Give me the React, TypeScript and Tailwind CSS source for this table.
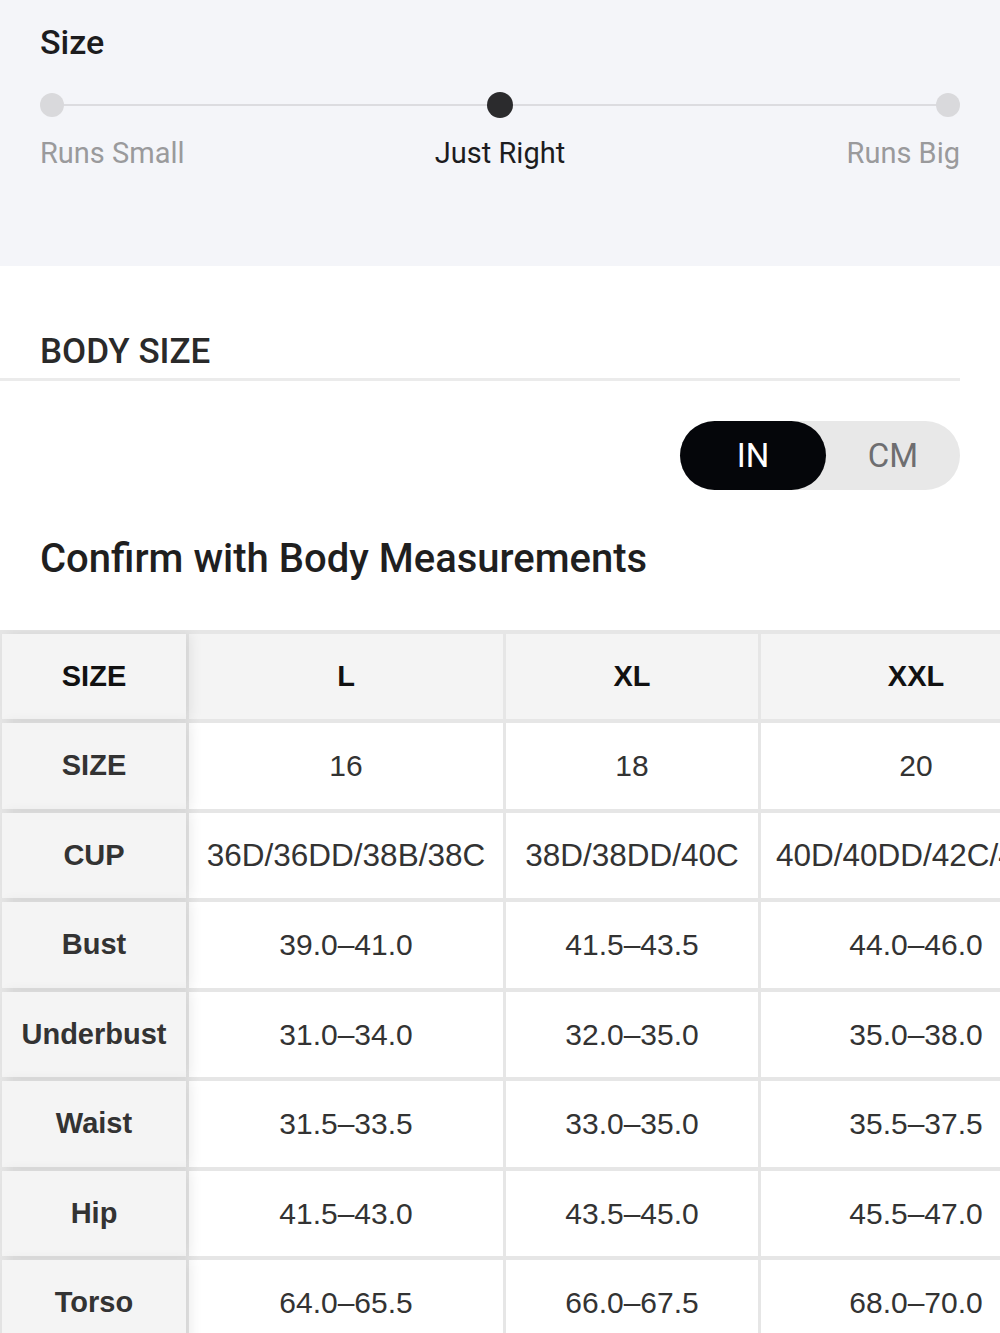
const heads = ['L', 'XL', 'XXL'];

const rows: [string, string[]][] = [
  ['SIZE', ['16', '18', '20']],
  ['CUP', ['36D/36DD/38B/38C', '38D/38DD/40C', '40D/40DD/42C/42D']],
  ['Bust', ['39.0–41.0', '41.5–43.5', '44.0–46.0']],
  ['Underbust', ['31.0–34.0', '32.0–35.0', '35.0–38.0']],
  ['Waist', ['31.5–33.5', '33.0–35.0', '35.5–37.5']],
  ['Hip', ['41.5–43.0', '43.5–45.0', '45.5–47.0']],
  ['Torso', ['64.0–65.5', '66.0–67.5', '68.0–70.0']],
];

const SizeFeel = () => {
  return (
    <section className="bg-[#f4f5f9] h-[266px] px-[40px] pt-[22px]">
      <h2 className="text-[34px] leading-[40px] font-medium text-[#1c1c1e]">Size</h2>
      <div className="relative mt-[30px] h-[26px] flex items-center justify-between">
        <div className="absolute left-[12px] right-[12px] top-[12px] h-[2px] bg-[#dcdce0]" />
        <span className="relative w-[24px] h-[24px] rounded-full bg-[#d9d9dc]" />
        <span className="relative w-[26px] h-[26px] rounded-full bg-[#2b2b2d]" />
        <span className="relative w-[24px] h-[24px] rounded-full bg-[#d9d9dc]" />
      </div>
      <div className="mt-[17px] grid grid-cols-3 text-[29px] leading-[36px]">
        <span className="text-left text-[#9a9a9c]">Runs Small</span>
        <span className="text-center text-[#1c1c1e]">Just Right</span>
        <span className="text-right text-[#9a9a9c]">Runs Big</span>
      </div>
    </section>
  );
};

const UnitToggle = () => {
  return (
    <div className="flex justify-end pr-[40px] mt-[40px]">
      <div className="flex w-[280px] h-[69px] rounded-full bg-[#e8e8e8] text-[33px]">
        <button className="w-[146px] h-full rounded-full bg-[#05060a] text-white">IN</button>
        <button className="flex-1 h-full text-[#6e6e70]">CM</button>
      </div>
    </div>
  );
};

const MeasureTable = () => {
  return (
    <div className="mt-[47px] overflow-hidden" style={{ fontFamily: '"Liberation Sans", Arial, sans-serif' }}>
      <div className="w-[1080px] grid grid-cols-[184px_314px_252px_310px] gap-x-[3px] gap-y-[4px] bg-[#e6e6e6] pt-[4px] pl-[2px]">
        <div className="relative z-10 h-[85px] flex items-center justify-center bg-[#f4f4f4] text-[29px] font-bold text-[#111] shadow-[5px_0_12px_rgba(0,0,0,0.08)]">
          SIZE
        </div>
        {heads.map((h) => (
          <div key={h} className="h-[85px] flex items-center justify-center bg-[#f4f4f4] text-[29px] font-bold text-[#111]">
            {h}
          </div>
        ))}
        {rows.map(([label, vals]) => (
          <>
            <div
              key={label}
              className="relative z-10 h-[85.5px] flex items-center justify-center bg-[#f4f4f4] text-[29px] font-bold text-[#333] shadow-[5px_0_12px_rgba(0,0,0,0.08)]"
            >
              {label}
            </div>
            {vals.map((v, i) => (
              <div
                key={label + i}
                className={
                  label === 'CUP'
                    ? 'h-[85.5px] flex items-center justify-center bg-white text-[31.5px] text-[#333] whitespace-nowrap'
                    : 'h-[85.5px] flex items-center justify-center bg-white text-[30px] text-[#333] whitespace-nowrap'
                }
              >
                {v}
              </div>
            ))}
          </>
        ))}
      </div>
    </div>
  );
};

export default function App() {
  return (
    <div className="w-[1000px] h-[1333px] overflow-hidden bg-white" style={{ fontFamily: 'Roboto, "Noto Sans", sans-serif' }}>
      <SizeFeel />
      <section className="pt-[65px]">
        <h3 className="px-[40px] text-[35px] leading-[42px] font-medium text-[#2a2a2a]">BODY SIZE</h3>
        <div className="mt-[5px] w-[960px] h-[3px] bg-[#ebebeb]" />
        <UnitToggle />
        <h3 className="mt-[45px] px-[40px] text-[40px] leading-[48px] font-medium text-[#1f1f1f]">
          Confirm with Body Measurements
        </h3>
        <MeasureTable />
      </section>
    </div>
  );
}
